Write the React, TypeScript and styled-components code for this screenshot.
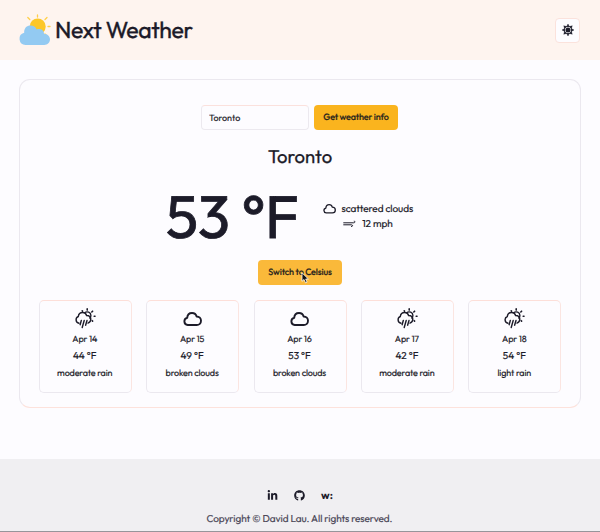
import React from "react";
import styled, { createGlobalStyle } from "styled-components";
import { FaLinkedinIn, FaGithub } from "react-icons/fa";

const GlobalStyle = createGlobalStyle`
  * { box-sizing: border-box; }
  body {
    margin: 0;
    background: #fdfcff;
    color: #1c1b29;
    font-family: Outfit, Lato, sans-serif;
    font-weight: 400;
    font-size: 9.5px;
    text-rendering: geometricPrecision;
    overflow: hidden;
  }
`;

const Page = styled.div`
  display: flex;
  flex-direction: column;
  height: 532px;
  border-bottom: 1px solid #96959a;
`;

const Header = styled.header`
  display: flex;
  align-items: center;
  justify-content: space-between;
  flex: none;
  height: 60px;
  padding: 0 20px 0 19px;
  background: #fef4ef;
`;

const Brand = styled.div`
  display: flex;
  align-items: center;
  gap: 4px;
`;

const Line = styled.span<{
  $size: number;
  $spacing?: number;
  $weight?: number;
  $height?: number;
  $stroke?: number;
  $drop?: number;
}>`
  display: block;
  padding-top: ${(p) => p.$drop ?? 0}px;
  white-space: nowrap;
  font-size: ${(p) => p.$size}px;
  font-weight: ${(p) => p.$weight ?? 400};
  letter-spacing: ${(p) => p.$spacing ?? 0}px;
  line-height: ${(p) => p.$height ?? Math.round(p.$size * 1.3)}px;
  -webkit-text-stroke: ${(p) => p.$stroke ?? 0.15}px currentColor;
`;

const ThemeButton = styled.button`
  display: grid;
  place-items: center;
  width: 25px;
  height: 25px;
  padding: 0;
  border: 1px solid #fbe2dc;
  border-radius: 4px;
  background: #fdfcff;
  color: #1c1b29;
`;

const Panel = styled.main`
  display: flex;
  flex-direction: column;
  align-items: center;
  flex: none;
  width: 562px;
  height: 329px;
  margin: 19px 0 0 19px;
  padding: 25px 19px 0;
  border: 1px solid #ebe8ef;
  border-bottom-color: #fde2dc;
  border-radius: 11px;
`;

const Search = styled.form`
  display: flex;
  gap: 5px;
  height: 25px;
  margin-right: 1px;
`;

const CityInput = styled.input`
  width: 108px;
  padding: 1px 7px 0;
  border: 1px solid #ece9ef;
  border-top-color: #fbe1dd;
  border-radius: 4px;
  outline: none;
  background: #fdfcff;
  color: #1c1b29;
  font: 400 9px Outfit, Lato, sans-serif;
  text-rendering: inherit;
  -webkit-text-stroke: 0.15px currentColor;
`;

const ActionButton = styled.button<{ $width: number; $tone: string }>`
  display: grid;
  place-items: center;
  flex: none;
  width: ${(p) => p.$width}px;
  height: 25px;
  padding: 0;
  border: 0;
  border-radius: 4px;
  background: ${(p) => p.$tone};
  color: #29241d;
  font-family: inherit;
  text-rendering: inherit;
`;

const City = styled.div`
  margin-top: 13px;
`;

const Current = styled.section`
  display: flex;
  align-items: center;
  gap: 24px;
  height: 78px;
  margin: 8px 0 5px;
  padding-right: 21px;
`;

const Conditions = styled.div`
  display: flex;
  flex-direction: column;
  align-items: center;
`;

const Condition = styled.div`
  display: flex;
  align-items: center;
  gap: 6px;
  height: 15px;
`;

const SwitchArea = styled.div`
  position: relative;
`;

const Cursor = styled.svg`
  position: absolute;
  left: 43px;
  top: 12px;
`;

const Forecast = styled.section`
  display: grid;
  grid-template-columns: repeat(5, 93px);
  column-gap: 14.4px;
  margin-top: 15px;
`;

const Day = styled.article`
  display: flex;
  flex-direction: column;
  align-items: center;
  height: 93px;
  padding: 6px 1px 0 0;
  border: 1px solid #ebe8ef;
  border-top-color: #fddfd9;
  border-right-color: #fbe5e1;
  border-radius: 5px;
`;

const DayIcon = styled.div`
  display: grid;
  place-items: center;
  height: 24px;
  margin-bottom: 2px;
`;

const Temperature = styled.div`
  margin: 3px 0 5px;
`;

const Footer = styled.footer`
  display: flex;
  flex-direction: column;
  align-items: center;
  flex: 1;
  margin-top: 51px;
  padding-top: 29px;
  background: #f0eff2;
`;

const Socials = styled.div`
  display: flex;
  align-items: center;
  justify-content: center;
  gap: 16px;
  height: 14px;
  margin-bottom: 10px;
`;

const SiteMark = styled.div`
  padding-bottom: 1px;
`;

const Copyright = styled.div`
  color: #4b4858;
  padding-right: 1px;
`;

const Logo = () => (
  <svg width="32" height="32" viewBox="0 0 32 32">
    <g stroke="#ffcf4a" strokeWidth="1.3" strokeLinecap="round">
      <path d="M18.5 1v2M8.8 3.5l2 2M28 3.5l-2 2M29 12.5h2M26 20l1.2 1.2" />
    </g>
    <circle cx="18.7" cy="12.5" r="8" fill="#fcc729" />
    <path
      d="M6.5 31a6.2 6.2 0 0 1-1.3-12.2C4.8 14 8 11.5 11.5 11.5c3 0 5.2 1.6 6.2 4 3.5-1.5 7.3.6 7.3 4.2 3.5.2 6 2.4 6 5.6 0 3.3-2.4 5.7-5.8 5.7z"
      fill="#93caf2"
    />
  </svg>
);

const Sun = () => (
  <svg width="14" height="14" viewBox="0 0 24 24" fill="currentColor">
    {[0, 45, 90, 135, 180, 225, 270, 315].map((angle) => (
      <path key={angle} d="M12 1.7 14.2 6H9.8z" transform={`rotate(${angle} 12 12)`} stroke="currentColor" strokeWidth=".7" />
    ))}
    <circle cx="12" cy="12" r="6.5" fill="none" stroke="currentColor" strokeWidth="1.5" />
    <circle cx="12" cy="12" r="4.3" />
  </svg>
);

const Cloud = ({ width = 19, stroke = 1.9 }: { width?: number; stroke?: number }) => (
  <svg width={width} height={(width * 14) / 19} viewBox="0 0 19 14" fill="none" overflow="visible">
    <path
      d="M4.7 13a3.6 3.6 0 0 1-.5-7.1C4.4 3 6.4 1 9 1c2.4 0 4.1 1.4 4.6 3.5 2.7 0 4.4 1.9 4.4 4.2 0 2.5-1.8 4.3-4.3 4.3z"
      stroke="currentColor"
      strokeWidth={stroke}
      strokeLinejoin="round"
    />
  </svg>
);

const Rain = () => (
  <svg width="22" height="22" viewBox="0 0 22 22" fill="none" stroke="currentColor" strokeWidth="1.4" strokeLinecap="round">
    <path d="M5 15.2a3.5 3.5 0 0 1-.7-6.7C4.6 6 6.4 4.5 8.6 4.5c2 0 3.5 1.1 4 3 2.7-.1 4.2 1.5 4.2 3.6 0 2-1.1 3.5-2.8 4" />
    <path d="M10.7 4.7c2.4-1.9 6.2-.3 6.2 2.8 0 1.1-.4 2-1.1 2.6M7.3 12.5l-1.2 4.2M10.2 12.5l-2 7M13 12.5l-1.4 4.7" />
    <path d="M13.2.9v1.2M18.6 3.2l-.8.8M8.2 2.8l.3.3M20.2 8.2h.8M18.2 12.7l.4.4" strokeWidth="1.6" />
  </svg>
);

const Wind = () => (
  <svg width="13" height="8" viewBox="0 0 13 8" fill="none" stroke="currentColor" strokeWidth="1" strokeLinecap="round">
    <path d="M.7 2.8h10c1.6 0 1.7-1.8.5-1.7M.7 4.8h7.8c1.6 0 1.4 2.2-.1 1.7" />
  </svg>
);

const days = [
  { date: "Apr 14", temp: "44 °F", text: "moderate rain", rain: true },
  { date: "Apr 15", temp: "49 °F", text: "broken clouds", rain: false },
  { date: "Apr 16", temp: "53 °F", text: "broken clouds", rain: false },
  { date: "Apr 17", temp: "42 °F", text: "moderate rain", rain: true },
  { date: "Apr 18", temp: "54 °F", text: "light rain", rain: true },
];

export default function App() {
  return (
    <>
      <GlobalStyle />
      <Page>
        <Header>
          <Brand>
            <Logo />
            <Line $size={23} $spacing={-0.38} $stroke={0.35}>Next Weather</Line>
          </Brand>
          <ThemeButton aria-label="Toggle theme"><Sun /></ThemeButton>
        </Header>
        <Panel>
          <Search onSubmit={(e) => e.preventDefault()}>
            <CityInput defaultValue="Toronto" aria-label="City" />
            <ActionButton $width={84} $tone="#fab41e">
              <Line $size={9} $weight={500} $spacing={-0.16} $drop={1}>Get weather info</Line>
            </ActionButton>
          </Search>
          <City><Line $size={18.5} $height={26} $stroke={0.25}>Toronto</Line></City>
          <Current>
            <Line $size={60} $height={78} $spacing={-0.4} $stroke={0.8}>53 °F</Line>
            <Conditions>
              <Condition><Cloud width={13} stroke={1.9} /><Line $size={10} $spacing={-0.05}>scattered clouds</Line></Condition>
              <Condition><Wind /><Line $size={10} $spacing={-0.05}>12 mph</Line></Condition>
            </Conditions>
          </Current>
          <SwitchArea>
            <ActionButton $width={84} $tone="#fab93a">
              <Line $size={9} $weight={500} $spacing={-0.14} $drop={1}>Switch to Celsius</Line>
            </ActionButton>
            <Cursor width="9" height="12" viewBox="0 0 9 12">
              <path d="M1 .8v8.5l2-1.8 1.5 3.3 1.6-.7L4.7 7h2.7z" fill="#111" stroke="#fff" strokeWidth=".8" />
            </Cursor>
          </SwitchArea>
          <Forecast>
            {days.map((d) => (
              <Day key={d.date}>
                <DayIcon>{d.rain ? <Rain /> : <Cloud />}</DayIcon>
                <Line $size={9} $spacing={-0.14} $drop={1}>{d.date}</Line>
                <Temperature><Line $size={10}>{d.temp}</Line></Temperature>
                <Line $size={9} $spacing={-0.14} $drop={1}>{d.text}</Line>
              </Day>
            ))}
          </Forecast>
        </Panel>
        <Footer>
          <Socials>
            <FaLinkedinIn size={11} />
            <FaGithub size={11} />
            <SiteMark><Line $size={11} $weight={700} $stroke={0}>w:</Line></SiteMark>
          </Socials>
          <Copyright><Line $size={10} $spacing={-0.07}>Copyright © David Lau. All rights reserved.</Line></Copyright>
        </Footer>
      </Page>
    </>
  );
}
